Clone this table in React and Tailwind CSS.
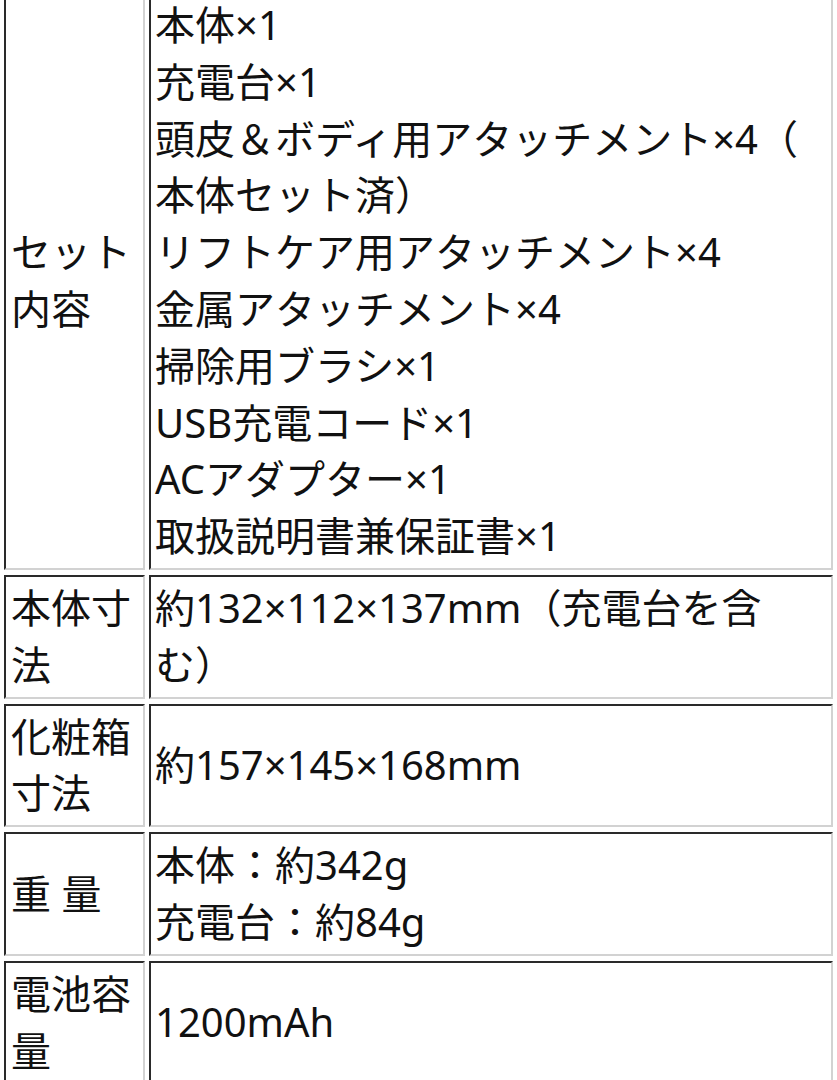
import React from "react";

const rows = [
  {
    label: "セット内容",
    value: [
      "本体×1",
      "充電台×1",
      "頭皮＆ボディ用アタッチメント×4（",
      "本体セット済）",
      "リフトケア用アタッチメント×4",
      "金属アタッチメント×4",
      "掃除用ブラシ×1",
      "USB充電コード×1",
      "ACアダプター×1",
      "取扱説明書兼保証書×1",
    ],
  },
  { label: "本体寸法", value: ["約132×112×137mm（充電台を含", "む）"] },
  { label: "化粧箱寸法", value: ["約157×145×168mm"] },
  { label: "重 量", value: ["本体：約342g", "充電台：約84g"] },
  { label: "電池容量", value: ["1200mAh"] },
];

const cell =
  "border-2 border-t-[#2a2a2a] border-l-[#2a2a2a] border-r-[#d2d2d2] border-b-[#d2d2d2] py-[3px] align-middle";

export default function App() {
  return (
    <div className="w-[837px] h-[1080px] overflow-hidden bg-white text-[#111] font-['Noto_Sans','Noto_Sans_CJK_JP',sans-serif] text-[40px] leading-[56.8px]">
      <table className="w-[837px] mt-[-13px] table-fixed border-separate border-spacing-x-[4px] border-spacing-y-[5px]">
        <colgroup>
          <col className="w-[141px]" />
          <col />
        </colgroup>
        <tbody>
          {rows.map((r) => (
            <tr key={r.label}>
              <td className={cell + " px-[5px] break-all"}>{r.label}</td>
              <td className={cell + " pl-[4px] pr-[5px] whitespace-nowrap"}>
                {r.value.map((v) => (
                  <div key={v}>{v}</div>
                ))}
              </td>
            </tr>
          ))}
        </tbody>
      </table>
    </div>
  );
}
